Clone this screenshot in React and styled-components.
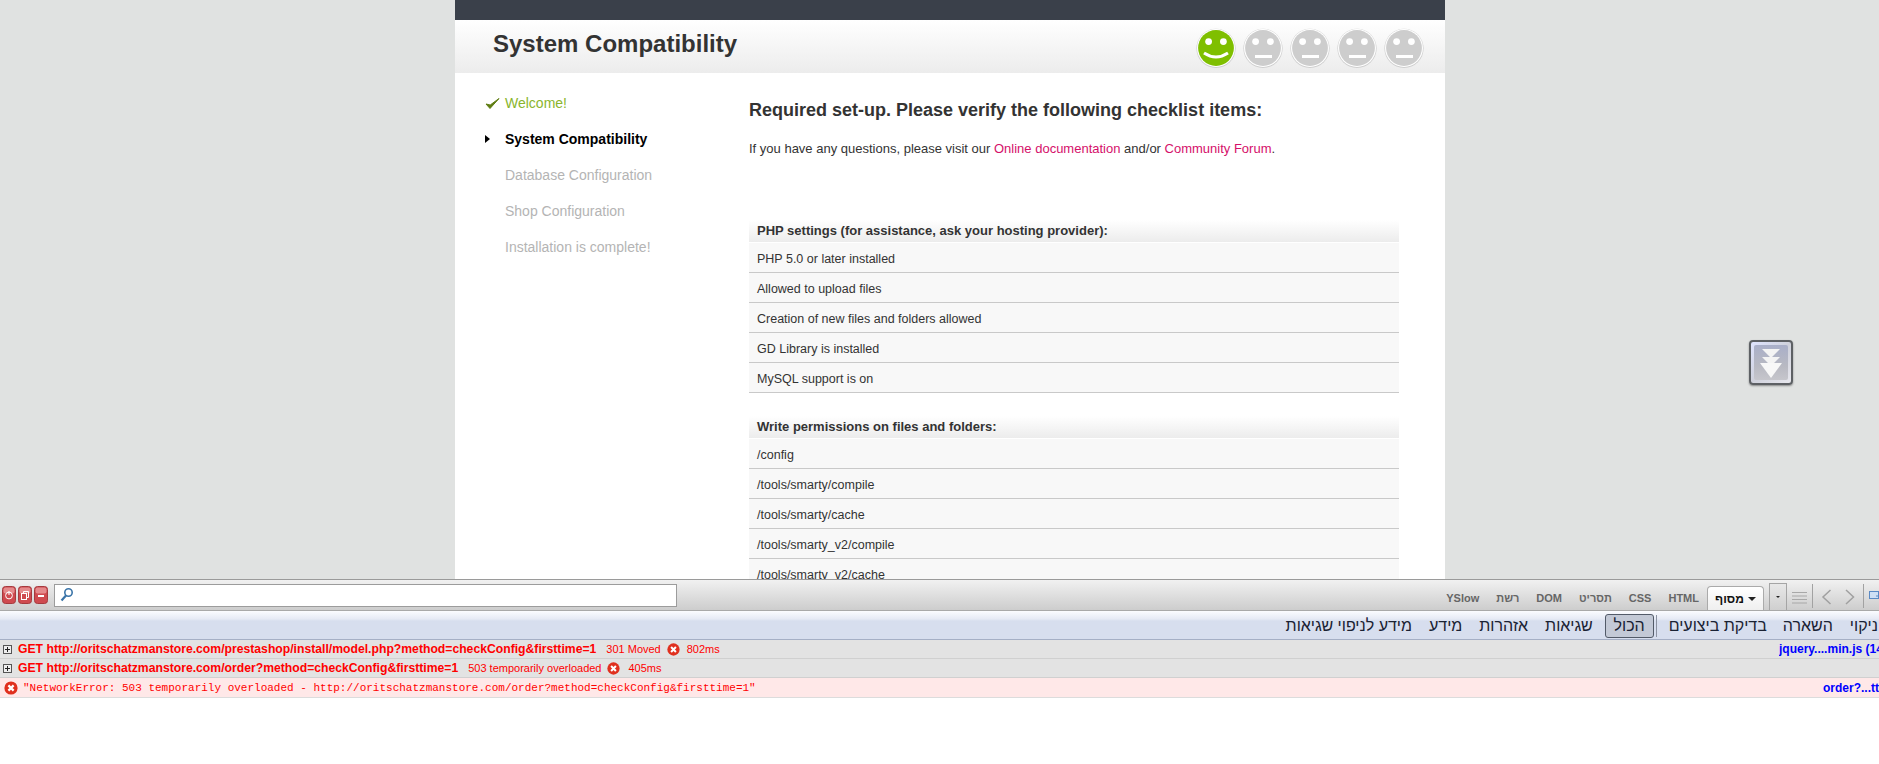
import styled, { createGlobalStyle } from "styled-components";

const GlobalStyle = createGlobalStyle`
  html, body {
    margin: 0;
    padding: 0;
    background: #fff;
    font-family: "Liberation Sans", Arial, sans-serif;
  }
`;

const Screen = styled.div`
  position: relative;
  width: 1879px;
  height: 764px;
  overflow: hidden;
  display: flex;
  flex-direction: column;
  background: #fff;
`;

const Viewport = styled.div`
  height: 579px;
  flex: none;
  overflow: hidden;
  box-sizing: border-box;
  padding-left: 455px;
  background: #e0e2e1;
  display: flex;
`;

const Card = styled.div`
  width: 990px;
  flex: none;
  background: #fff;
`;

const TopBar = styled.div`
  height: 20px;
  background: #3a404a;
`;

const TitleBand = styled.div`
  height: 53px;
  box-sizing: border-box;
  display: flex;
  justify-content: space-between;
  align-items: flex-start;
  padding: 8px 21px 0 38px;
  background: linear-gradient(#fff, #ececec);
`;

const PageTitle = styled.h1`
  margin: 0;
  padding-top: 2px;
  font-size: 24px;
  line-height: 28px;
  font-weight: bold;
  color: #333;
`;

const Smileys = styled.div`
  display: flex;
  gap: 7px;
`;

const SmileyFace = styled.svg`
  width: 40px;
  height: 40px;
  display: block;
`;

const Content = styled.div`
  display: grid;
  grid-template-columns: 294px 650px;
  padding-top: 12px;
`;

const Steps = styled.ul`
  list-style: none;
  margin: 0;
  padding: 0 0 0 30px;
`;

const Step = styled.li`
  height: 36px;
  display: flex;
  align-items: center;
  font-size: 14px;
  color: ${(props) => props.color || "#b4b4b4"};
  font-weight: ${(props) => (props.$current ? "bold" : "normal")};
`;

const StepMarker = styled.span`
  width: 20px;
  flex: none;
  display: flex;
  align-items: center;
`;

const Main = styled.div`
  padding-top: 14px;
`;

const Heading = styled.h2`
  margin: 0 0 20px;
  font-size: 18px;
  line-height: 22px;
  font-weight: bold;
  color: #333;
`;

const Intro = styled.p`
  margin: 0 0 63px;
  font-size: 13px;
  line-height: 16px;
  color: #333;
`;

const Pink = styled.a`
  color: #d5106a;
`;

const Section = styled.section`
  margin-bottom: 23px;
`;

const SectionHead = styled.div`
  height: 22px;
  margin-bottom: 1px;
  padding-left: 8px;
  font-size: 13px;
  line-height: 22px;
  font-weight: bold;
  color: #333;
  background: linear-gradient(#fff, #ececec);
`;

const CheckRow = styled.div`
  height: 30px;
  box-sizing: border-box;
  padding-left: 8px;
  font-size: 12.5px;
  line-height: 33px;
  color: #333;
  background: #f8f8f8;
  border-bottom: 1px solid #c9c9c9;
`;

const DevTools = styled.div`
  flex: 1;
  min-height: 0;
  overflow: hidden;
  background: #fff;
`;

const Toolbar = styled.div`
  height: 32px;
  box-sizing: border-box;
  display: flex;
  align-items: flex-end;
  justify-content: space-between;
  border-top: 1px solid #9a9a9a;
  border-bottom: 1px solid #a9a9a9;
  background: linear-gradient(#f1f1f1, #cdcdcd);
`;

const ToolLeft = styled.div`
  display: flex;
  align-items: center;
  align-self: center;
  padding-left: 2px;
`;

const PanelButton = styled.svg`
  width: 14px;
  height: 18px;
  display: block;
  margin-right: 2px;
`;

const Search = styled.div`
  width: 623px;
  height: 23px;
  box-sizing: border-box;
  margin-left: 4px;
  padding: 2px 0 0 5px;
  background: #fff;
  border: 1px solid #9c9c9c;
`;

const ToolRight = styled.div`
  display: flex;
  align-items: flex-end;
  height: 100%;
  margin-right: -6px;
`;

const Tab = styled.div`
  margin-right: 17px;
  height: 24px;
  display: flex;
  align-items: center;
  font-size: 11px;
  font-weight: bold;
  color: #666;
`;

const ActiveTab = styled.div`
  width: 57px;
  height: 24px;
  box-sizing: border-box;
  margin-left: -9px;
  display: flex;
  align-items: center;
  justify-content: center;
  gap: 4px;
  font-size: 12px;
  font-weight: bold;
  color: #111;
  background: linear-gradient(#fff, #efefef);
  border: 1px solid #aaa;
  border-bottom: none;
  border-radius: 4px 4px 0 0;
`;

const TabMenu = styled.div`
  width: 18px;
  height: 27px;
  box-sizing: border-box;
  margin-left: 5px;
  display: flex;
  align-items: center;
  justify-content: center;
  background: linear-gradient(#e8e8e8, #cfcfcf);
  border: 1px solid #a5a5a5;
  border-bottom: none;
`;

const Caret = styled.span`
  width: 0;
  height: 0;
  border-left: ${(props) => props.$size}px solid transparent;
  border-right: ${(props) => props.$size}px solid transparent;
  border-top: ${(props) => props.$size}px solid #222;
`;

const ToolIcon = styled.svg`
  display: block;
  flex: none;
  margin-left: ${(props) => props.$left}px;
  margin-bottom: 5px;
`;

const Divider = styled.span`
  width: 1px;
  height: 24px;
  flex: none;
  margin-left: ${(props) => props.$left}px;
  margin-bottom: 2px;
  background: #a2a2a2;
`;

const FilterBar = styled.div`
  height: 29px;
  box-sizing: border-box;
  display: flex;
  align-items: center;
  gap: 17px;
  padding-top: 2px;
  overflow: hidden;
  white-space: nowrap;
  font-size: 16px;
  color: #1a2233;
  border-bottom: 1px solid #a5afc5;
  background: linear-gradient(#fbfcff 0, #e6eaf5 8px, #d7deee 10px, #d7deee 100%);
`;

const FilterItem = styled.span`
  flex: none;
  margin-right: ${(props) => props.$pull || 0}px;
`;

const FilterActive = styled.span`
  flex: none;
  height: 24px;
  box-sizing: border-box;
  width: 49px;
  text-align: center;
  line-height: 22px;
  margin: 0 -15px 0 -5px;
  background: #c3c9d6;
  border: 1px solid #525a68;
  border-radius: 3px;
`;

const FilterSeparator = styled.span`
  width: 1px;
  height: 22px;
  flex: none;
  margin-right: -5px;
  background: #8c93a2;
`;

const LogRow = styled.div`
  height: 19px;
  box-sizing: border-box;
  display: flex;
  align-items: center;
  overflow: hidden;
  white-space: nowrap;
  background: #e3e3e3;
  border-bottom: 1px solid #d0d0d0;
  font-size: 11px;
  color: #f00;
`;

const ErrorRow = styled(LogRow)`
  height: 20px;
  padding-top: 1px;
  background: #ffe8e8;
  border-bottom: 1px solid #dcdcdc;
`;

const Expander = styled.svg`
  width: 9px;
  height: 9px;
  display: block;
  flex: none;
  margin: 0 6px 0 3px;
`;

const RequestUrl = styled.b`
  font-size: 12.2px;
  margin-right: 10px;
`;

const ErrorBadge = styled.svg`
  width: ${(props) => props.$size}px;
  height: ${(props) => props.$size}px;
  display: block;
  flex: none;
  margin: ${(props) => props.$margin};
`;

const ErrorMessage = styled.span`
  font-family: "Liberation Mono", "Courier New", monospace;
  font-size: 11px;
`;

const SourceLink = styled.a`
  width: ${(props) => props.$width}px;
  flex: none;
  margin-left: auto;
  overflow: hidden;
  font-size: 12px;
  font-weight: bold;
  color: #0000ff;
`;

const ScrollPill = styled.div`
  position: absolute;
  left: 1749px;
  top: 340px;
  width: 44px;
  height: 45px;
  box-sizing: border-box;
  padding: 3px;
  border: 2px solid #5d6064;
  border-radius: 4px;
  background: linear-gradient(135deg, #dfe4ff, #cfd1dc 50%, #e8e8ee);
  box-shadow: 0 1px 2px rgba(0, 0, 0, 0.4);
`;

const ScrollInner = styled.div`
  height: 100%;
  display: flex;
  align-items: center;
  justify-content: center;
  border-radius: 2px;
  background: linear-gradient(#a9afc9, #b8b9c2 60%, #c6c6cc);
`;

const Smiley = ({ happy }) => (
  <SmileyFace viewBox="0 0 40 40">
    <circle cx="20" cy="20.4" r="19.6" fill="#cfcfcf" />
    <circle cx="20" cy="20" r="19" fill="#fff" />
    <circle cx="20" cy="20" r="17.9" fill={happy ? "#7fbf00" : "#cdcdcd"} />
    <circle cx="12.6" cy="13.6" r="3.4" fill="#fff" />
    <circle cx="27.4" cy="13.6" r="3.4" fill="#fff" />
    {happy ? (
      <path d="M8 25 Q20 33 32 25" fill="none" stroke="#fff" strokeWidth="3" />
    ) : (
      <rect x="12" y="27" width="17" height="3" fill="#fff" />
    )}
  </SmileyFace>
);

const XBadge = ({ size, margin }) => (
  <ErrorBadge viewBox="0 0 14 14" $size={size} $margin={margin}>
    <circle cx="7" cy="7" r="6.6" fill="#e0301e" />
    <path d="M4.4 4.4 L9.6 9.6 M9.6 4.4 L4.4 9.6" stroke="#fff" strokeWidth="2.2" />
  </ErrorBadge>
);

const Plus = () => (
  <Expander viewBox="0 0 9 9">
    <rect x="0.5" y="0.5" width="8" height="8" fill="#eee" stroke="#555" />
    <path d="M2 4.5 H7 M4.5 2 V7" stroke="#222" />
  </Expander>
);

const PanelBtn = ({ children }) => (
  <PanelButton viewBox="0 0 14 18">
    <rect x="0.5" y="0.5" width="13" height="17" rx="3" fill="#cf4a4f" stroke="#a53a3e" />
    <rect x="1.5" y="1.5" width="11" height="6" rx="2" fill="#e58a8c" />
    {children}
  </PanelButton>
);

const phpChecks = [
  "PHP 5.0 or later installed",
  "Allowed to upload files",
  "Creation of new files and folders allowed",
  "GD Library is installed",
  "MySQL support is on",
];

const folderChecks = [
  "/config",
  "/tools/smarty/compile",
  "/tools/smarty/cache",
  "/tools/smarty_v2/compile",
  "/tools/smarty_v2/cache",
];

const App = () => {
  return (
    <Screen>
      <GlobalStyle />
      <Viewport>
        <Card>
          <TopBar />
          <TitleBand>
            <PageTitle>System Compatibility</PageTitle>
            <Smileys>
              <Smiley happy />
              <Smiley />
              <Smiley />
              <Smiley />
              <Smiley />
            </Smileys>
          </TitleBand>
          <Content>
            <Steps>
              <Step color="#8ab52d">
                <StepMarker>
                  <svg width="15" height="13" viewBox="0 0 15 13">
                    <path d="M1 7 L5 11.5 L14 1.5 L5.2 8 Z" fill="#5f7d12" stroke="#5f7d12" strokeWidth="1" />
                  </svg>
                </StepMarker>
                Welcome!
              </Step>
              <Step color="#000" $current>
                <StepMarker>
                  <svg width="5" height="8" viewBox="0 0 5 8">
                    <path d="M0 0 L5 4 L0 8 Z" fill="#000" />
                  </svg>
                </StepMarker>
                System Compatibility
              </Step>
              <Step>
                <StepMarker />
                Database Configuration
              </Step>
              <Step>
                <StepMarker />
                Shop Configuration
              </Step>
              <Step>
                <StepMarker />
                Installation is complete!
              </Step>
            </Steps>
            <Main>
              <Heading>Required set-up. Please verify the following checklist items:</Heading>
              <Intro>
                If you have any questions, please visit our <Pink>Online documentation</Pink> and/or{" "}
                <Pink>Community Forum</Pink>.
              </Intro>
              <Section>
                <SectionHead>PHP settings (for assistance, ask your hosting provider):</SectionHead>
                {phpChecks.map((item) => (
                  <CheckRow key={item}>{item}</CheckRow>
                ))}
              </Section>
              <Section>
                <SectionHead>Write permissions on files and folders:</SectionHead>
                {folderChecks.map((item) => (
                  <CheckRow key={item}>{item}</CheckRow>
                ))}
              </Section>
            </Main>
          </Content>
        </Card>
      </Viewport>
      <DevTools>
        <Toolbar>
          <ToolLeft>
            <PanelBtn>
              <circle cx="7" cy="9.5" r="3.4" fill="none" stroke="#fff" />
              <path d="M7 5 V9" stroke="#fff" />
            </PanelBtn>
            <PanelBtn>
              <rect x="3.5" y="7.5" width="5" height="6" fill="none" stroke="#fff" />
              <path d="M5.5 7 V5.5 H10.5 V11.5 H9" fill="none" stroke="#fff" />
            </PanelBtn>
            <PanelBtn>
              <rect x="4" y="9" width="6" height="2" fill="#fff" />
            </PanelBtn>
            <Search>
              <svg width="14" height="15" viewBox="0 0 14 15">
                <circle cx="8.5" cy="5.5" r="3.7" fill="none" stroke="#3a74a8" strokeWidth="1.6" />
                <path d="M6 8.5 L1.5 13.5" stroke="#3a74a8" strokeWidth="2.2" />
              </svg>
            </Search>
          </ToolLeft>
          <ToolRight>
            <Tab>YSlow</Tab>
            <Tab>רשת</Tab>
            <Tab>DOM</Tab>
            <Tab>תסריט</Tab>
            <Tab>CSS</Tab>
            <Tab>HTML</Tab>
            <ActiveTab>
              מסוף
              <Caret $size={4} />
            </ActiveTab>
            <TabMenu>
              <Caret $size={2} />
            </TabMenu>
            <ToolIcon width="15" height="14" viewBox="0 0 15 14" $left={5}>
              <path d="M0 1.5 H15 M0 5 H15 M0 8.5 H15 M0 12 H15" stroke="#a8a8a8" />
            </ToolIcon>
            <Divider $left={5} />
            <ToolIcon width="11" height="16" viewBox="0 0 11 16" $left={8}>
              <path d="M9.5 1 L2 8 L9.5 15" fill="none" stroke="#a0a0a0" strokeWidth="1.5" />
            </ToolIcon>
            <ToolIcon width="10" height="16" viewBox="0 0 10 16" $left={13}>
              <path d="M1 1 L8.5 8 L1 15" fill="none" stroke="#a0a0a0" strokeWidth="1.5" />
            </ToolIcon>
            <Divider $left={8} />
            <ToolIcon width="16" height="14" viewBox="0 0 16 14" $left={5}>
              <rect x="0.5" y="0.5" width="9" height="7" fill="#cfe0f5" stroke="#5b8ac4" />
              <path d="M7 5 H15 V13" fill="none" stroke="#5b8ac4" />
            </ToolIcon>
          </ToolRight>
        </Toolbar>
        <FilterBar dir="rtl">
          <FilterItem $pull={1}>ניקוי</FilterItem>
          <FilterItem>השארה</FilterItem>
          <FilterItem $pull={-1}>בדיקת ביצועים</FilterItem>
          <FilterSeparator />
          <FilterActive>הכול</FilterActive>
          <FilterItem>שגיאות</FilterItem>
          <FilterItem>אזהרות</FilterItem>
          <FilterItem>מידע</FilterItem>
          <FilterItem>מידע לניפוי שגיאות</FilterItem>
        </FilterBar>
        <LogRow>
          <Plus />
          <RequestUrl>GET http://oritschatzmanstore.com/prestashop/install/model.php?method=checkConfig&amp;firsttime=1</RequestUrl>
          301 Moved
          <XBadge size={13} margin="0 7px 0 6px" />
          802ms
          <SourceLink $width={100}>jquery....min.js (14</SourceLink>
        </LogRow>
        <LogRow>
          <Plus />
          <RequestUrl>GET http://oritschatzmanstore.com/order?method=checkConfig&amp;firsttime=1</RequestUrl>
          503 temporarily overloaded
          <XBadge size={13} margin="0 9px 0 5px" />
          405ms
        </LogRow>
        <ErrorRow>
          <XBadge size={14} margin="0 5px 0 4px" />
          <ErrorMessage>"NetworkError: 503 temporarily overloaded - http://oritschatzmanstore.com/order?method=checkConfig&amp;firsttime=1"</ErrorMessage>
          <SourceLink $width={56}>order?...tt</SourceLink>
        </ErrorRow>
      </DevTools>
      <ScrollPill>
        <ScrollInner>
          <svg width="24" height="32" viewBox="0 0 24 32">
            <path d="M3 2 H21 L12 11 Z M3 10 H21 L12 19 Z" fill="#f4f4f4" />
            <path d="M1 16 H23 L12 31 Z" fill="#f8f8f8" />
          </svg>
        </ScrollInner>
      </ScrollPill>
    </Screen>
  );
};

export default App;
